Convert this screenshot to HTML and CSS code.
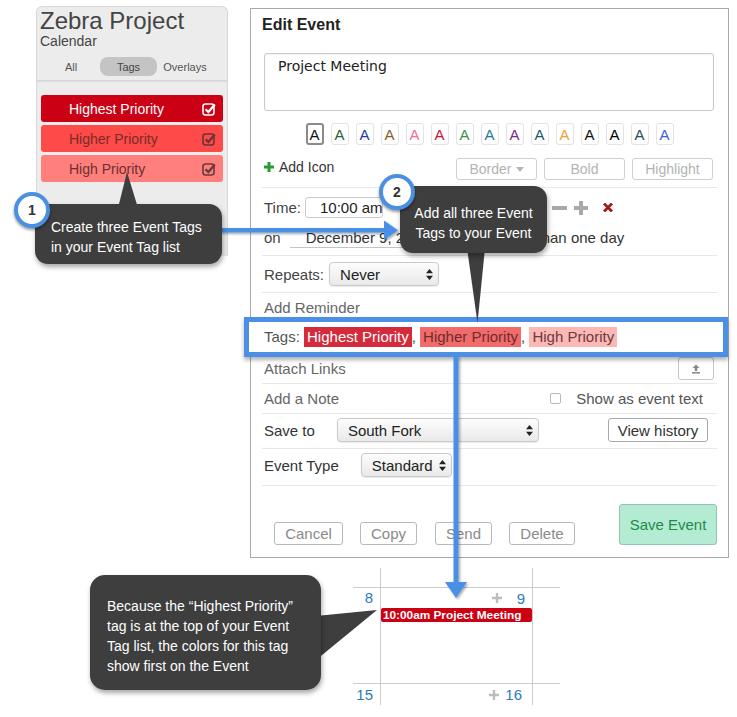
FILE: index.html
```html
<!DOCTYPE html>
<html lang="en">
<head>
<meta charset="utf-8">
<title>Event Tags</title>
<link rel="stylesheet" href="styles.css">
</head>
<body>
<div class="canvas">
  <div class="top">
    <aside class="sidebar">
      <div class="brand">
        <div class="brand-title">Zebra Project</div>
        <div class="brand-sub">Calendar</div>
        <div class="tabs">
          <span class="tab">All</span>
          <span class="tab active">Tags</span>
          <span class="tab">Overlays</span>
        </div>
      </div>
      <ul class="taglist">
        <li class="tag tag-1"><span>Highest Priority</span>
          <svg class="chk" viewBox="0 0 14 14" width="14" height="14"><rect x="1" y="2" width="11" height="11" rx="2.5" fill="none" stroke="currentColor" stroke-width="1.6"/><path d="M3.6 7.2 L6.4 10 L12.8 2.6" fill="none" stroke="currentColor" stroke-width="2.3"/></svg></li>
        <li class="tag tag-2"><span>Higher Priority</span>
          <svg class="chk" viewBox="0 0 14 14" width="14" height="14"><rect x="1" y="2" width="11" height="11" rx="2.5" fill="none" stroke="currentColor" stroke-width="1.6"/><path d="M3.6 7.2 L6.4 10 L12.8 2.6" fill="none" stroke="currentColor" stroke-width="2.3"/></svg></li>
        <li class="tag tag-3"><span>High Priority</span>
          <svg class="chk" viewBox="0 0 14 14" width="14" height="14"><rect x="1" y="2" width="11" height="11" rx="2.5" fill="none" stroke="currentColor" stroke-width="1.6"/><path d="M3.6 7.2 L6.4 10 L12.8 2.6" fill="none" stroke="currentColor" stroke-width="2.3"/></svg></li>
      </ul>
    </aside>

    <section class="editor">
      <h2 class="editor-title">Edit Event</h2>
      <div class="textarea">Project Meeting</div>
      <div class="swatches">
        <span class="sw sel" style="color:#111">A</span>
        <span class="sw" style="color:#2e5e34">A</span>
        <span class="sw" style="color:#2338b5">A</span>
        <span class="sw" style="color:#8b5a2b">A</span>
        <span class="sw" style="color:#ef6fa0">A</span>
        <span class="sw" style="color:#d0122c">A</span>
        <span class="sw" style="color:#3f8f4f">A</span>
        <span class="sw" style="color:#1f7a9a">A</span>
        <span class="sw" style="color:#7e2a8e">A</span>
        <span class="sw" style="color:#1d5a6a">A</span>
        <span class="sw" style="color:#f0a236">A</span>
        <span class="sw" style="color:#111">A</span>
        <span class="sw" style="color:#000">A</span>
        <span class="sw" style="color:#2b4c5a">A</span>
        <span class="sw" style="color:#3d5fe0">A</span>
      </div>

      <div class="row row-icon">
        <span class="add-icon">
          <svg width="10" height="10" viewBox="0 0 10 10"><path d="M5 0 V10 M0 5 H10" stroke="#2a9a35" stroke-width="3"/></svg>
          Add Icon
        </span>
        <div class="ghosts">
          <span class="ghost">Border <svg class="caret" width="8" height="5" viewBox="0 0 8 5"><path d="M0 0 H8 L4 5Z" fill="#b5b5b5"/></svg></span>
          <span class="ghost">Bold</span>
          <span class="ghost">Highlight</span>
        </div>
      </div>

      <div class="row row-time">
        <div class="tline">
          <span class="lbl">Time:</span>
          <span class="tinput">10:00 am</span>
          <svg class="minus" width="15" height="4" viewBox="0 0 15 4"><rect width="15" height="4" fill="#a9a9a9"/></svg>
          <svg class="plus" width="16" height="14" viewBox="0 0 16 14"><path d="M8 0 V14 M1 7 H15" stroke="#a9a9a9" stroke-width="4"/></svg>
          <svg class="xmark" width="10" height="9" viewBox="0 0 10 9"><path d="M1 0.5 L9 8.5 M9 0.5 L1 8.5" stroke="#9e1c1c" stroke-width="2.8"/></svg>
        </div>
        <div class="tline">
          <span class="lbl">on</span>
          <span class="dinput">December 9, 2</span>
          <span class="multi">han one day</span>
        </div>
      </div>

      <div class="row row-rep">
        <span class="lbl">Repeats:</span>
        <span class="select sel-never">Never
          <svg class="arr" width="7" height="11" viewBox="0 0 7 11"><path d="M3.5 0 L7 4.2 H0Z M0 6.8 H7 L3.5 11Z" fill="#222"/></svg></span>
      </div>

      <div class="row row-rem"><span class="muted">Add Reminder</span></div>

      <div class="row row-tags">
        <span class="tags-line"><span class="tags-lbl">Tags: </span><span class="chip chip-1">Highest Priority</span>, <span class="chip chip-2">Higher Priority</span>, <span class="chip chip-3">High Priority</span></span>
      </div>

      <div class="row row-attach">
        <span class="muted">Attach Links</span>
        <span class="upload"><svg width="10" height="10" viewBox="0 0 10 10"><path d="M5 0.5 L8.5 4 H6.3 V7 H3.7 V4 H1.5Z" fill="#8a8a8a"/><rect x="1" y="8" width="8" height="1.6" fill="#8a8a8a"/></svg></span>
      </div>

      <div class="row row-note">
        <span class="muted">Add a Note</span>
        <span class="show"><span class="cbox"></span><span>Show as event text</span></span>
      </div>

      <div class="row row-save">
        <span class="lbl dark">Save to</span>
        <span class="select sel-fork">South Fork
          <svg class="arr" width="7" height="11" viewBox="0 0 7 11"><path d="M3.5 0 L7 4.2 H0Z M0 6.8 H7 L3.5 11Z" fill="#222"/></svg></span>
        <span class="hist">View history</span>
      </div>

      <div class="row row-type">
        <span class="lbl dark">Event Type</span>
        <span class="select sel-type">Standard
          <svg class="arr" width="7" height="11" viewBox="0 0 7 11"><path d="M3.5 0 L7 4.2 H0Z M0 6.8 H7 L3.5 11Z" fill="#222"/></svg></span>
      </div>

      <div class="footer">
        <span class="btn b-cancel">Cancel</span>
        <span class="btn b-copy">Copy</span>
        <span class="btn b-send">Send</span>
        <span class="btn b-delete">Delete</span>
        <span class="save">Save Event</span>
      </div>
    </section>
  </div>

  <div class="cal">
    <div class="cell"></div>
    <div class="cell mid"></div>
    <div class="cell"></div>

    <div class="cell wk"><span class="num">8</span></div>
    <div class="cell mid wk">
      <div class="dayhead">
        <svg width="10" height="10" viewBox="0 0 10 10"><path d="M5 0 V10 M0 5 H10" stroke="#bdbdbd" stroke-width="2.4"/></svg>
        <span class="num">9</span>
      </div>
      <div class="event">10:00am Project Meeting</div>
    </div>
    <div class="cell wk"></div>

    <div class="cell last"><span class="num">15</span></div>
    <div class="cell mid last">
      <div class="dayhead dh2">
        <svg width="10" height="10" viewBox="0 0 10 10"><path d="M5 0 V10 M0 5 H10" stroke="#bdbdbd" stroke-width="2.4"/></svg>
        <span class="num">16</span>
      </div>
    </div>
    <div class="cell last"></div>
  </div>

  <svg class="overlay" width="737" height="717" viewBox="0 0 737 717">
    <defs>
      <filter id="sh" x="-30%" y="-5%" width="160%" height="110%">
        <feDropShadow dx="1.5" dy="1.5" stdDeviation="1" flood-color="#000" flood-opacity="0.35"/>
      </filter>
    </defs>
    <g fill="#4a8fe6" filter="url(#sh)">
      <rect x="220" y="228" width="166" height="4.5"/>
      <polygon points="384,220.5 398,230.2 384,240"/>
      <rect x="453.5" y="356" width="5" height="228"/>
      <polygon points="445,582 467,582 456,598"/>
    </g>
    <g fill="#3e3e3e">
      <polygon points="127,172 118,208 138,208"/>
      <polygon points="467,248 485,248 477.5,323"/>
      <polygon points="316,616 377,610 316,660"/>
    </g>
  </svg>

  <div class="callout c1">Create three Event Tags<br>in your Event Tag list</div>
  <div class="callout c2">Add all three Event<br>Tags to your Event</div>
  <div class="callout c3">Because the “Highest Priority”<br>tag is at the top of your Event<br>Tag list, the colors for this tag<br>show first on the Event</div>
  <div class="badge b1">1</div>
  <div class="badge b2">2</div>
</div>
</body>
</html>
```

FILE: styles.css
```css
* { box-sizing: border-box; }
body {
  margin: 0;
  background: #fff;
  font-family: "Liberation Sans", Arial, Helvetica, sans-serif;
}
.canvas {
  position: relative;
  width: 737px;
  height: 717px;
  overflow: hidden;
}
.top {
  display: flex;
  align-items: flex-start;
  padding: 6px 0 0 36px;
  height: 558px;
}

/* ---------- sidebar ---------- */
.sidebar {
  width: 192px;
  height: 250px;
  background: #ececec;
  border: 1px solid #d9d9d9;
  border-bottom: none;
  border-radius: 6px 6px 0 0;
}
.brand {
  padding: 1px 0 4px 3px;
  border-bottom: 1px solid #d6d6d6;
  box-shadow: 0 1px 1px rgba(0,0,0,.05);
}
.brand-title { font-size: 24px; line-height: 26px; color: #444; }
.brand-sub { font-size: 14px; line-height: 16px; color: #444; margin-top: -1px; }
.tabs { display: flex; margin: 8px 0 0 3px; height: 19px; font-size: 11px; color: #555; }
.tab { width: 56px; display: flex; align-items: center; justify-content: center; }
.tab.active { width: 57px; margin-left: 1px; background: #c4c4c4; border-radius: 8px; color: #444; }
.taglist {
  list-style: none;
  margin: 14px 4px 0;
  padding: 0;
  display: flex;
  flex-direction: column;
  gap: 3px;
}
.tag {
  height: 27px;
  border-radius: 3px;
  display: flex;
  align-items: center;
  justify-content: space-between;
  padding: 0 7px 0 28px;
  font-size: 14px;
}
.tag-1 { background: #cc0014; color: #fff; }
.tag-2 { background: #fe4a48; color: #7a2b2b; }
.tag-3 { background: #ff7f7c; color: #6b3030; }
.tag-2 .chk { color: #6a3434; }
.tag-3 .chk { color: #6a3a3a; }

/* ---------- editor ---------- */
.editor {
  width: 479px;
  height: 550px;
  margin: 2px 0 0 22px;
  border: 1px solid #a9a9a9;
  background: #fff;
  display: flex;
  flex-direction: column;
}
.editor-title {
  margin: 0;
  padding: 7px 0 0 11px;
  font-size: 16px;
  line-height: 18px;
  height: 25px;
  flex: none;
  font-weight: bold;
  color: #222;
}
.textarea {
  margin: 19px 0 0 13px;
  width: 450px;
  height: 58px;
  flex: none;
  border: 1px solid #c9c9c9;
  border-radius: 3px;
  padding: 4px 13px;
  font-family: "DejaVu Sans", Verdana, sans-serif;
  font-size: 14px;
  line-height: 17px;
  color: #222;
  box-shadow: inset 0 1px 2px rgba(0,0,0,.05);
}
.swatches {
  display: flex;
  justify-content: center;
  gap: 7px;
  margin-top: 12px;
  height: 22px;
  flex: none;
}
.sw {
  width: 18px;
  height: 22px;
  border: 1px solid #e3e3e3;
  border-radius: 3px;
  display: flex;
  align-items: center;
  justify-content: center;
  font-size: 15px;
}
.sw.sel { border: 2px solid #8a8a8a; }

.row {
  display: flex;
  align-items: center;
  margin: 0 11px;
  padding: 0 4px 0 2px;
  border-bottom: 1px solid #e8e8e8;
  font-size: 15px;
  color: #444;
  flex: none;
}
.lbl { color: #444; }
.lbl.dark { color: #333; }
.muted { color: #666; }

.row-icon { margin-top: 13px; height: 30px; padding-bottom: 7px; align-items: flex-end; }
.add-icon { display: flex; align-items: center; gap: 5px; font-size: 14px; color: #333; height: 22px; padding-bottom: 4px; }
.ghosts { margin-left: auto; display: flex; gap: 7px; }
.ghost {
  width: 81px;
  height: 22px;
  border: 1px solid #d0d0d0;
  border-radius: 3px;
  display: flex;
  align-items: center;
  justify-content: center;
  gap: 4px;
  color: #b3b3b3;
  font-size: 14px;
}

.row-time { height: 68px; flex-direction: column; align-items: stretch; padding-top: 9px; }
.tline { display: flex; align-items: center; height: 21px; }
.tline + .tline { margin-top: 9px; }
.tinput {
  margin-left: 4px;
  width: 78px;
  height: 21px;
  border: 1px solid #cbcbcb;
  border-radius: 3px;
  padding-left: 14px;
  display: flex;
  align-items: center;
  white-space: nowrap;
  color: #222;
}
.minus { margin-left: 169px; }
.plus { margin-left: 6px; }
.xmark { margin-left: 14px; }
.dinput {
  margin-left: 9px;
  width: 181px;
  height: 21px;
  border-bottom: 1px solid #c4c4c4;
  padding-left: 16px;
  color: #333;
  display: flex;
  align-items: center;
  white-space: nowrap;
}
.cbox {
  width: 11px;
  height: 11px;
  border: 1px solid #b9b9b9;
  border-radius: 2px;
  background: #fff;
  flex: none;
}
.multi { margin-left: 71px; color: #333; white-space: nowrap; }

.row-rep { height: 37px; }
.select {
  display: flex;
  align-items: center;
  justify-content: space-between;
  height: 24px;
  border: 1px solid #c9c9c9;
  border-radius: 4px;
  background: linear-gradient(#fdfdfd, #e9e9e9);
  box-shadow: 0 1px 1px rgba(0,0,0,.08);
  padding: 0 5px 0 10px;
  color: #222;
}
.sel-never { margin-left: 5px; width: 110px; }
.row-rem { height: 24px; align-items: flex-start; padding-top: 6px; line-height: 17px; border-bottom: none; }

.row-tags {
  position: relative;
  z-index: 2;
  height: 40px;
  margin: 0 0 0 -7px;
  padding-left: 15px;
  border: 5px solid #4b8fe7;
  background: #fff;
  box-shadow: 0 3px 4px rgba(0,0,0,.3);
  color: #444;
}
.tags-line { white-space: nowrap; line-height: 20px; }
.tags-lbl { color: #555; }
.chip { display: inline-block; height: 20px; line-height: 20px; padding: 0 3px; }
.chip-1 { background: #d52a3c; color: #fff; }
.chip-2 { background: #f26a69; color: #6b2e2e; }
.chip-3 { background: #fcb8b7; color: #6b3a3a; }

.row-attach { height: 27px; justify-content: space-between; padding-right: 3px; padding-bottom: 3px; }
.upload {
  width: 36px;
  height: 23px;
  border: 1px solid #c8c8c8;
  border-radius: 3px;
  display: flex;
  align-items: center;
  justify-content: center;
}
.row-note { height: 30px; justify-content: space-between; padding-right: 14px; }
.show { display: flex; align-items: center; gap: 15px; color: #555; }

.row-save { height: 35px; padding-right: 9px; padding-bottom: 2px; }
.sel-fork { margin-left: 22px; width: 202px; }
.hist {
  margin-left: auto;
  width: 100px;
  height: 24px;
  border: 1px solid #a9a9a9;
  border-radius: 3px;
  display: flex;
  align-items: center;
  justify-content: center;
  color: #333;
}
.row-type { height: 37px; padding-bottom: 4px; }
.sel-type { margin-left: 22px; width: 91px; }

.footer {
  flex: 1;
  display: flex;
  align-items: flex-end;
  margin: 0 11px;
  padding-bottom: 12px;
}
.btn {
  height: 23px;
  border: 1px solid #b9b9b9;
  border-radius: 3px;
  color: #8a8a8a;
  font-size: 15px;
  display: flex;
  align-items: center;
  justify-content: center;
}
.b-cancel { width: 69px; margin-left: 12px; }
.b-copy { width: 57px; margin-left: 17px; }
.b-send { width: 57px; margin-left: 18px; }
.b-delete { width: 66px; margin-left: 17px; }
.save {
  margin-left: auto;
  width: 98px;
  height: 41px;
  background: #b3ecd2;
  border: 1px solid #92c4b0;
  border-radius: 3px;
  color: #1f8a4c;
  font-size: 15px;
  display: flex;
  align-items: center;
  justify-content: center;
}

/* ---------- calendar ---------- */
.cal {
  margin: 10px 0 0 353px;
  width: 207px;
  display: grid;
  grid-template-columns: 27px 153px 27px;
  grid-template-rows: 19px 97px 21px;
}
.cell.mid { border-left: 1px solid #cccccc; border-right: 1px solid #cccccc; }
.cell.wk { border-top: 1px solid #cccccc; border-bottom: 1px solid #cccccc; }
.num { color: #2a7bbd; font-size: 15px; line-height: 17px; }
.cell.wk > .num { display: block; padding: 1px 7px 0 0; text-align: right; }
.cell.last > .num { display: block; padding: 2px 7px 0 0; text-align: right; }
.dayhead {
  display: flex;
  justify-content: flex-end;
  align-items: center;
  gap: 15px;
  height: 20px;
  padding: 0 7px 0 0;
}
.dayhead.dh2 { gap: 6px; padding: 2px 10px 0 0; height: 19px; }
.event {
  height: 14px;
  background: #cc0012;
  border-radius: 2px;
  color: #fff;
  font-weight: bold;
  font-size: 11.8px;
  line-height: 14px;
  padding-left: 2px;
  white-space: nowrap;
  overflow: hidden;
}

/* ---------- overlays ---------- */
.overlay {
  position: absolute;
  left: 0;
  top: 0;
  z-index: 5;
  pointer-events: none;
}
.callout {
  position: absolute;
  z-index: 6;
  background: #3e3e3e;
  color: #fff;
  font-size: 14px;
  line-height: 20px;
  border-radius: 13px;
  box-shadow: 1px 3px 5px rgba(0,0,0,.35);
}
.c1 { left: 35px; top: 204px; width: 187px; height: 60px; padding: 13px 0 0 16px; }
.c2 { left: 400px; top: 186px; width: 147px; height: 67px; padding-top: 17px; text-align: center; }
.c3 { left: 90px; top: 575px; width: 231px; height: 115px; padding: 21px 0 0 17px; border-radius: 15px; }
.badge {
  position: absolute;
  z-index: 7;
  width: 36px;
  height: 36px;
  border-radius: 50%;
  background: #fff;
  border: 4px solid #4a90e2;
  box-shadow: 0 2px 3px rgba(0,0,0,.4);
  display: flex;
  align-items: center;
  justify-content: center;
  font-size: 14px;
  font-weight: bold;
  color: #333;
}
.b1 { left: 14px; top: 192px; }
.b2 { left: 379px; top: 174px; }
```
